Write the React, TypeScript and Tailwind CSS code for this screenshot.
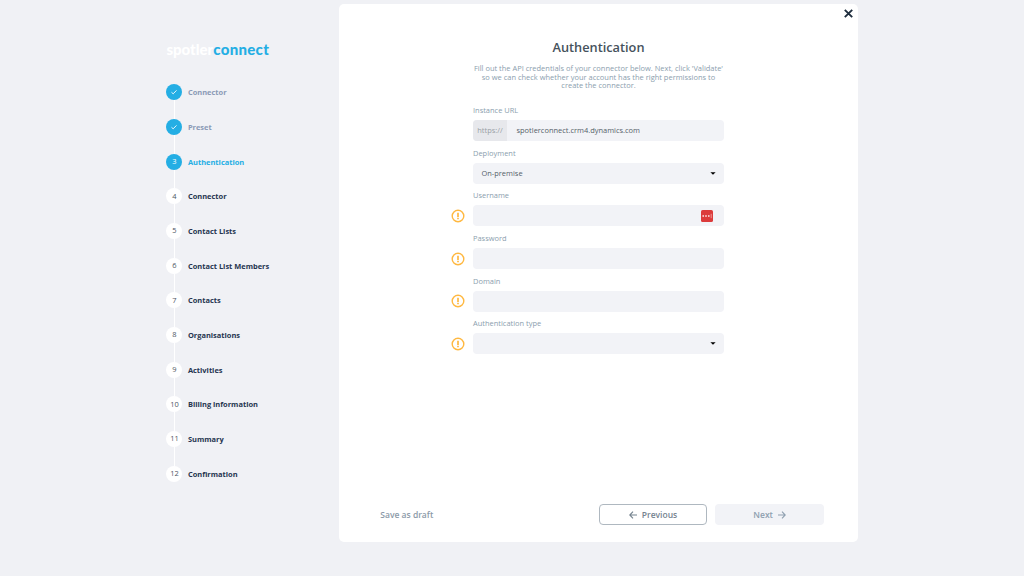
import type { ReactNode } from "react";

const steps = [
  "Connector",
  "Preset",
  "Authentication",
  "Connector",
  "Contact Lists",
  "Contact List Members",
  "Contacts",
  "Organisations",
  "Activities",
  "Billing information",
  "Summary",
  "Confirmation",
];

const CURRENT = 2;

function Step({ label, index }: { label: string; index: number }) {
  const done = index < CURRENT;
  const active = index === CURRENT;
  const last = index === steps.length - 1;
  return (
    <li className="flex h-[34.7px] gap-[5.5px]">
      <div className="flex w-4 flex-col items-center">
        <span
          className={`flex size-4 shrink-0 items-center justify-center rounded-full text-[7.46px] ${
            done || active ? "bg-[#24aee4] text-white" : "bg-white text-[#4d5663]"
          }`}
        >
          {done ? (
            <svg viewBox="0 0 8 8" className="size-2" fill="none" stroke="currentColor" strokeWidth="0.9">
              <path d="M1.5 4.3 3.2 5.8 6.5 2.4" />
            </svg>
          ) : (
            index + 1
          )}
        </span>
        {!last && <span className="w-px flex-1 bg-white" />}
      </div>
      <span
        className={`h-4 text-[7.46px] leading-4 font-bold whitespace-nowrap ${
          done ? "text-[#8a9ab5]" : active ? "text-[#24aee4]" : "text-[#263550]"
        }`}
      >
        {label}
      </span>
    </li>
  );
}

function Warning() {
  return (
    <svg viewBox="0 0 14 14" className="-ml-[0.2px] mt-[0.5px] size-[14px]" fill="none" stroke="#ffb840">
      <circle cx="7" cy="7" r="5.8" strokeWidth="1.4" />
      <path d="M7 3.7V8" strokeWidth="1.7" />
      <path d="M7 8.7v1.6" strokeWidth="1.7" />
    </svg>
  );
}

function Caret() {
  return (
    <svg viewBox="0 0 6 3" className="mr-2 h-[3px] w-[6px]" fill="#000">
      <path d="M.4.2h5.2L3 2.8z" />
    </svg>
  );
}

function Field({ label, warn, children }: { label: string; warn?: boolean; children?: ReactNode }) {
  return (
    <div className="flex h-[42.67px] flex-col">
      <label className="ml-[21.5px] h-[13.9px] text-[7.46px] leading-[9.6px] text-[#8b9eae]">{label}</label>
      <div className="flex h-[21.3px] items-center">
        <div className="w-[21.5px] shrink-0">{warn && <Warning />}</div>
        <div className="flex h-full flex-1 items-center overflow-hidden rounded-[4px] bg-[#f2f3f7] text-[7.46px] text-[#555f69]">
          {children}
        </div>
      </div>
    </div>
  );
}

export default function App() {
  return (
    <div className="flex h-[576px] w-[1024px] overflow-hidden bg-[#f0f1f5] font-['Open_Sans',sans-serif]">
      <aside className="w-[339px] pt-[37px] pl-[166.4px]">
        <div className="flex h-[24px] items-center font-['Lato',sans-serif] text-[15px] font-black whitespace-nowrap">
          <span className="text-white">spotler</span>
          <span className="tracking-[0.3px] text-[#24aee4]">connect</span>
        </div>
        <ol className="mt-[23.2px]">
          {steps.map((label, i) => (
            <Step key={i} label={label} index={i} />
          ))}
        </ol>
      </aside>
      <main className="mt-1 flex h-[538.3px] w-[519px] flex-col rounded-[5px] bg-white">
        <div className="flex h-[33px] justify-end pt-[5px] pr-[5px]">
          <svg viewBox="0 0 9 9" className="size-[9px]" stroke="#1e2d3d" strokeWidth="1.9">
            <path d="M.8.8 8.2 8.2M8.2.8.8 8.2" />
          </svg>
        </div>
        <h1 className="text-center text-[12.78px] leading-5 font-semibold text-[#46525c]">Authentication</h1>
        <p className="mt-[7px] text-center text-[7.48px] leading-[8.53px] text-[#8b9eae]">
          Fill out the API credentials of your connector below. Next, click 'Validate'
          <br />
          so we can check whether your account has the right permissions to
          <br />
          create the connector.
        </p>
        <form className="mt-[16.4px] ml-[112.5px] w-[272.3px]">
          <Field label="Instance URL">
            <span className="flex h-full w-[34px] items-center justify-center bg-[#e7e8ec] text-[#999fa5]">https://</span>
            <span className="ml-[9.5px]">spotlerconnect.crm4.dynamics.com</span>
          </Field>
          <Field label="Deployment">
            <span className="ml-[8.5px] flex-1">On-premise</span>
            <Caret />
          </Field>
          <Field label="Username" warn>
            <span className="flex-1" />
            <svg viewBox="0 0 12 12" className="mr-[11px] size-3">
              <rect width="12" height="12" rx="1.6" fill="#dc3b3b" />
              <path d="M1.5 6h1.4M4.3 6h1.4M7.1 6h1.4" stroke="#fff" strokeWidth="1.4" />
              <path d="M10.2 3.8v4.4" stroke="#f0a0a0" strokeWidth=".9" />
            </svg>
          </Field>
          <Field label="Password" warn />
          <Field label="Domain" warn />
          <Field label="Authentication type" warn>
            <span className="flex-1" />
            <Caret />
          </Field>
        </form>
        <footer className="mt-auto mb-[17px] flex h-[21.5px] items-center pr-[34px] pl-[41.3px] text-[8.53px] font-semibold">
          <button className="pt-px text-[#8b9aa8]">Save as draft</button>
          <button className="ml-auto flex h-[21.5px] w-[108.7px] items-center justify-center gap-[5px] rounded-[4px] border border-[#afb8c0] text-[#75838f]">
            <svg viewBox="0 0 8 8" className="size-2" fill="none" stroke="currentColor" strokeWidth="1.1">
              <path d="M8 4H.8M4 .7.8 4 4 7.3" />
            </svg>
            <span className="pt-px">Previous</span>
          </button>
          <button className="ml-2 flex h-[21.3px] w-[108.7px] items-center justify-center gap-[5px] rounded-[4px] bg-[#f2f3f7] text-[#8fa0b0]">
            <span className="pt-px">Next</span>
            <svg viewBox="0 0 8 8" className="size-2" fill="none" stroke="currentColor" strokeWidth="1.1">
              <path d="M0 4h7.2M4 .7 7.2 4 4 7.3" />
            </svg>
          </button>
        </footer>
      </main>
    </div>
  );
}
